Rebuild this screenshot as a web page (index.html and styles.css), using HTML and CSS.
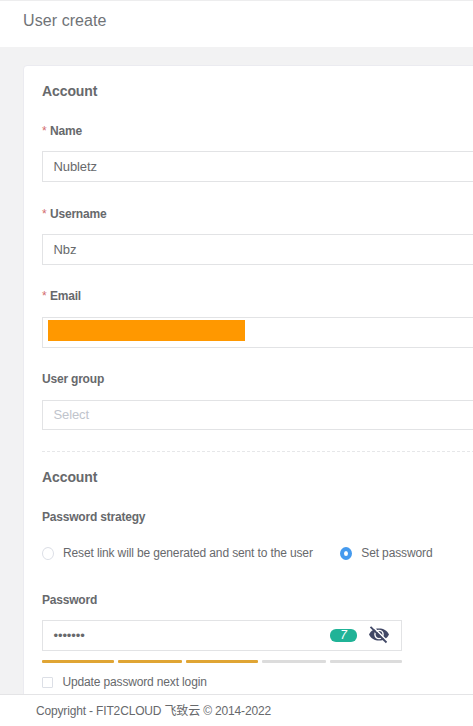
FILE: index.html
```
<!DOCTYPE html>
<html lang="en">
<head>
<meta charset="utf-8">
<title>User create</title>
<link rel="stylesheet" href="styles.css">
</head>
<body>
<div class="page">
  <header class="header"><h1>User create</h1></header>
  <main class="content">
    <form class="card">
      <h2 class="section-title">Account</h2>
      <div class="field">
        <div class="label required"><span>Name</span></div>
        <div class="input"><span>Nubletz</span></div>
      </div>
      <div class="field">
        <div class="label required"><span>Username</span></div>
        <div class="input"><span>Nbz</span></div>
      </div>
      <div class="field email-field">
        <div class="label required"><span>Email</span></div>
        <div class="input email"><span class="redacted"></span></div>
      </div>
      <div class="field group">
        <div class="label"><span>User group</span></div>
        <div class="input select"><span>Select</span></div>
      </div>
      <div class="divider"></div>
      <h2 class="section-title second">Account</h2>
      <div class="label strategy-label"><span>Password strategy</span></div>
      <div class="radios">
        <div class="radio"><i class="dot"></i><span>Reset link will be generated and sent to the user</span></div>
        <div class="radio"><i class="dot checked"></i><span>Set password</span></div>
      </div>
      <div class="label password-label"><span>Password</span></div>
      <div class="input password">
        <span class="mask">•••••••</span>
        <span class="count"><b>7</b></span>
        <svg class="eye" viewBox="0 0 20 18">
          <path d="M0 8.5C2.1 4.4 5.6 2.5 10 2.500s7.900 1.900 10 6c-2.100 4.100-5.600 6-10 6s-7.900-1.900-10-6z" fill="#414866"/>
          <circle cx="10" cy="8.500" r="4.100" fill="none" stroke="#fff" stroke-width="1.400"/>
          <path d="M3.300.1l15.300 15.300" stroke="#fff" stroke-width="1.500"/>
          <path d="M1.500.900l16 15.600" stroke="#414866" stroke-width="1.800"/>
        </svg>
      </div>
      <div class="strength"><i class="on"></i><i class="on"></i><i class="on"></i><i></i><i></i></div>
      <div class="check"><i class="box"></i><span>Update password next login</span></div>
    </form>
  </main>
  <footer class="footer"><span>Copyright - FIT2CLOUD 飞致云 © 2014-2022</span></footer>
</div>
</body>
</html>
```
FILE: styles.css
```
* { box-sizing: border-box; }
body {
  margin: 0;
  color: #67696c;
  background: #f2f2f3;
  font-family: "Liberation Sans", "Noto Sans CJK SC", sans-serif;
  font-size: 12px;
}
.page { display: flex; flex-direction: column; height: 726px; overflow: hidden; }
.header {
  flex: none;
  height: 47px;
  padding: 10px 0 0 23px;
  background: #fff;
  border-top: 1px solid #ededee;
}
h1, h2 { margin: 0; }
h1 { font-size: 16px; line-height: 20px; font-weight: 400; color: #707377; letter-spacing: .08px; }
.content { flex: 1; min-height: 0; overflow: hidden; padding: 18px 0 0 23px; }
.card {
  width: 500px;
  height: 700px;
  padding: 15px 0 0 18px;
  background: #fff;
  border: 1px solid #ebebf0;
  border-radius: 4px;
}
.section-title { height: 20px; font-size: 14px; line-height: 20px; margin-bottom: 20px; letter-spacing: -.1px; }
.section-title.second { margin: 15px 0 20px; }
.field { height: 82.75px; }
.field.group { height: 81.75px; }
.field.group .input { height: 30px; margin-top: 11px; }
.label { height: 20px; line-height: 20px; font-size: 12px; font-weight: 700; letter-spacing: -.2px; }
.email-field .label { height: 20px; line-height: 18px; }
.required::before { content: "*"; color: #d36b6f; font-weight: 400; margin-right: 3.500px; }
.input {
  display: flex;
  align-items: center;
  height: 31px;
  margin-top: 10px;
  padding-left: 10.500px;
  border: 1px solid #e2e3e5;
  background: #fff;
  font-size: 13px;
  letter-spacing: -.1px;
}
.email { align-items: flex-start; padding: 2px 0 0 5px; }
.redacted { width: 197px; height: 21px; background: #ff9800; }
.select { color: #c0c4cc; }
.select span { margin-top: -1px; }
.divider {
  height: 1px;
  background: repeating-linear-gradient(90deg, #e6e7e9 0 3px, #fff 3px 5px);
}
.radios { display: flex; gap: 27px; margin-top: 16px; height: 20px; letter-spacing: -.13px; }
.radio, .check { display: flex; align-items: center; line-height: 20px; }
.dot { width: 12px; height: 13px; border: 1px solid #dcdfe6; border-radius: 50%; margin-right: 9px; }
.dot.checked { border: 4.500px solid #459aee; background: #fff; margin-right: 9.500px; }
.password-label { margin-top: 27px; }
.password { width: 360px; padding-right: 12px; }
.mask { flex: 1; font-size: 13px; }
.count {
  width: 27px;
  height: 13px;
  border-radius: 6px;
  background: #20b397;
  color: #fff;
  text-align: center;
  line-height: 13px;
  margin-right: 12px;
}
.count b { display: block; font-size: 12px; font-weight: 400; font-style: italic; }
.eye { width: 20px; height: 18px; margin-top: -2px; }
.strength { display: grid; grid-template-columns: 72px 64px 72px 64px 72px; gap: 4px; margin-top: 9px; height: 3px; }
.strength i { background: #dcdcdc; border-radius: 1px; }
.strength .on { background: #e0a534; }
.check { height: 20px; margin-top: 9px; letter-spacing: -.15px; }
.box { width: 11px; height: 11px; border: 1px solid #dcdfe6; border-radius: 1px; margin-right: 9.500px; }
.footer {
  flex: none;
  height: 32px;
  padding-left: 36px;
  border-top: 1px solid #e4e4e6;
  background: #fff;
  line-height: 33px;
  letter-spacing: -.16px;
}
```
